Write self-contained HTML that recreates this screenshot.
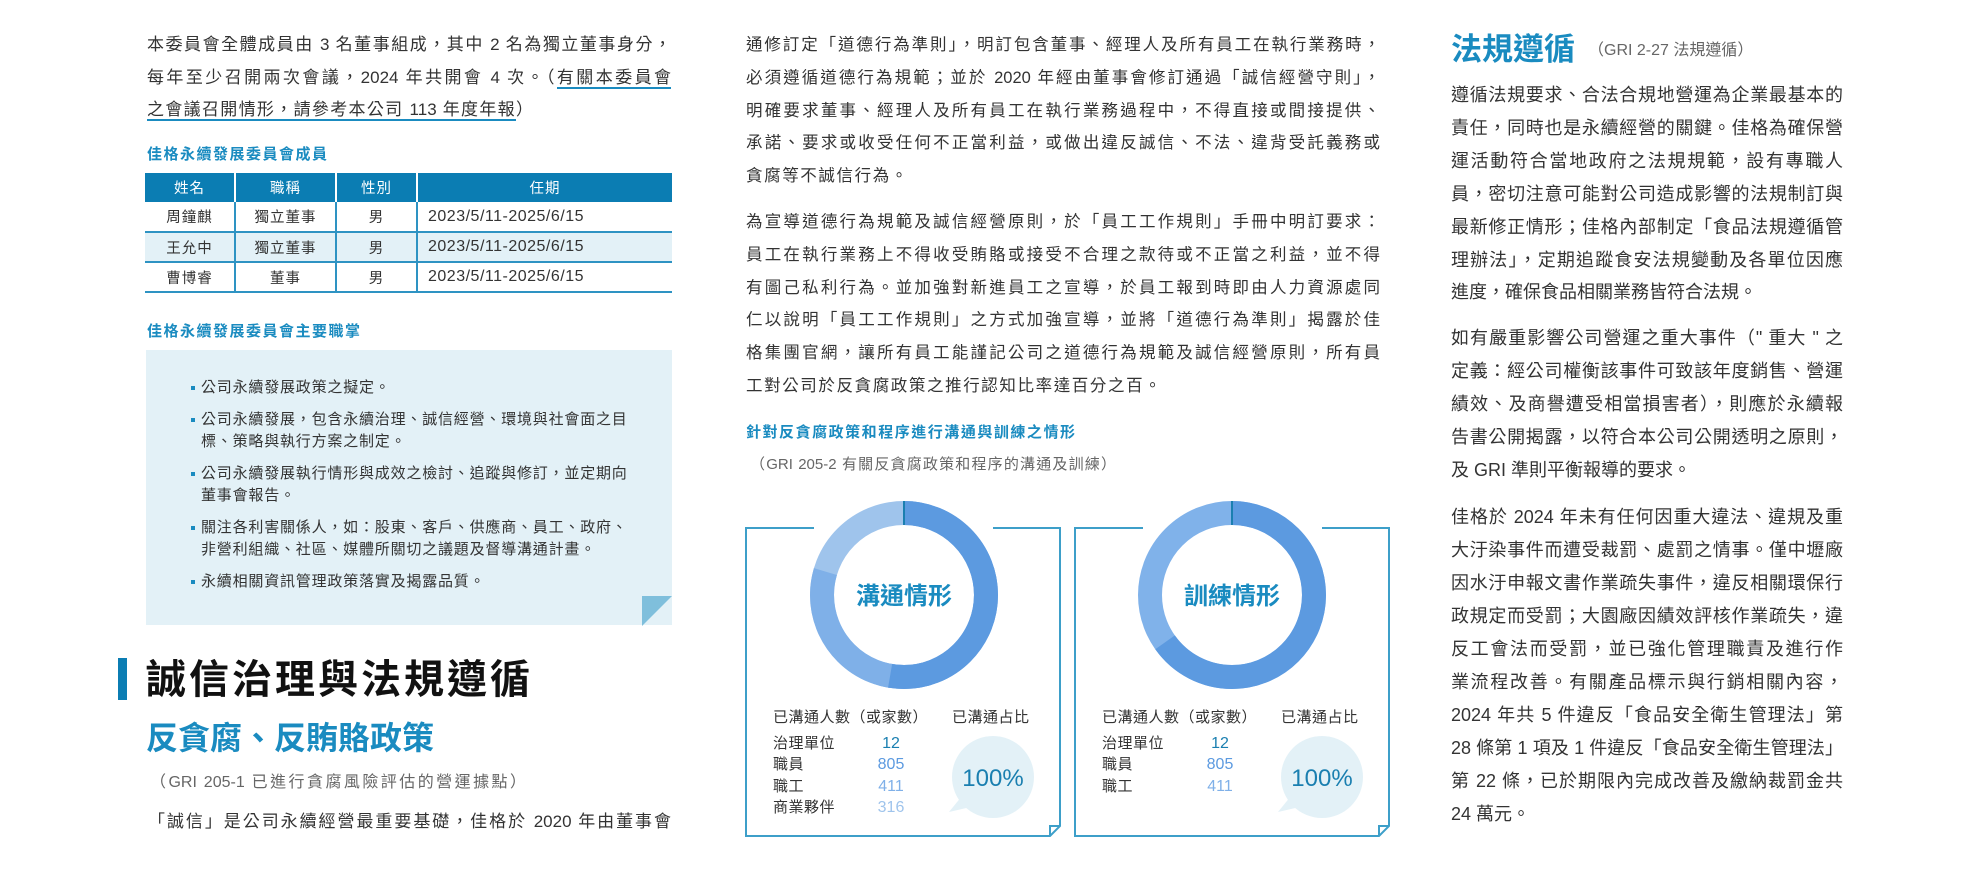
<!DOCTYPE html>
<html><head><meta charset="utf-8"><style>
*{margin:0;padding:0;box-sizing:border-box}
body{width:1980px;height:882px;background:#fff;position:relative;overflow:hidden;font-family:"Liberation Sans","Noto Sans CJK TC",sans-serif;color:#333}
.l{position:absolute;white-space:nowrap;height:26px;line-height:26px}
.j{text-align:justify;text-align-last:justify}
.c1{left:147px;width:524px;font-size:17px}
.c2{left:746px;width:634px;font-size:16.5px}
.c3{left:1451px;width:392px;font-size:18px}
.bh{color:#1a8bc0;font-weight:bold;font-size:15px}
u{text-decoration:none;border-bottom:2px solid #1a8bc0}
table{position:absolute;left:145px;top:173px;width:527px;border-collapse:collapse;font-size:14.5px}
th{background:#0b7db3;color:#fff;font-weight:normal;height:29px;border-left:2px solid #fff;letter-spacing:1px}
th:first-child{border-left:none}
td{height:30px;text-align:center;border-bottom:2px solid #2e93c3;border-left:2px solid #2e93c3;letter-spacing:1px}
td:first-child{border-left:none}
td.d{text-align:left;padding-left:10px;font-size:16px;letter-spacing:0.5px}
tr.a td{background:#e3f1f7}
.box{position:absolute;left:146px;top:350px;width:526px;height:275px;background:#e3f1f7}
.bl{position:absolute;left:201px;font-size:15px;letter-spacing:0.8px;white-space:nowrap;height:22px;line-height:22px;color:#333}
.bl:before{content:"";position:absolute;left:-10px;top:9px;width:4px;height:4px;background:#1a8bc0}
.bl.n:before{display:none}
.g{color:#666}
</style></head><body>

<div class="l c1 j" style="top:32px">本委員會全體成員由 3 名董事組成，其中 2 名為獨立董事身分，</div>
<div class="l c1 j" style="top:65px">每年至少召開兩次會議，2024 年共開會 4 次。（<u>有關本委員會</u></div>
<div class="l c1" style="top:97px;width:386px;text-align:justify;text-align-last:justify"><u>之會議召開情形，請參考本公司 113 年度年報</u>）</div>

<div class="l bh" style="left:147px;top:142px;letter-spacing:1.5px">佳格永續發展委員會成員</div>
<table>
<tr><th style="width:90px">姓名</th><th style="width:101px">職稱</th><th style="width:81px">性別</th><th>任期</th></tr>
<tr><td>周鐘麒</td><td>獨立董事</td><td>男</td><td class="d">2023/5/11-2025/6/15</td></tr>
<tr class="a"><td>王允中</td><td>獨立董事</td><td>男</td><td class="d">2023/5/11-2025/6/15</td></tr>
<tr><td>曹博睿</td><td>董事</td><td>男</td><td class="d">2023/5/11-2025/6/15</td></tr>
</table>
<div class="l bh" style="left:147px;top:319px;letter-spacing:1.5px">佳格永續發展委員會主要職掌</div>

<div class="box"></div>
<svg style="position:absolute;left:642px;top:595px" width="30" height="31"><polygon points="0,1 30,1 0,31" fill="#7fbfdc"/></svg>
<div class="bl" style="top:377px">公司永續發展政策之擬定。</div>
<div class="bl" style="top:409px">公司永續發展，包含永續治理、誠信經營、環境與社會面之目</div>
<div class="bl n" style="top:431px">標、策略與執行方案之制定。</div>
<div class="bl" style="top:463px">公司永續發展執行情形與成效之檢討、追蹤與修訂，並定期向</div>
<div class="bl n" style="top:485px">董事會報告。</div>
<div class="bl" style="top:517px">關注各利害關係人，如：股東、客戶、供應商、員工、政府、</div>
<div class="bl n" style="top:539px">非營利組織、社區、媒體所關切之議題及督導溝通計畫。</div>
<div class="bl" style="top:571px">永續相關資訊管理政策落實及揭露品質。</div>

<div style="position:absolute;left:118px;top:658px;width:9px;height:42px;background:#0b7db3"></div>
<div class="l j" style="left:146px;width:384px;top:656px;height:48px;line-height:48px;font-size:40px;font-weight:bold;color:#111">誠信治理與法規遵循</div>
<div class="l j" style="left:146px;width:288px;top:718px;height:40px;line-height:40px;font-size:32px;font-weight:bold;color:#1a8bc0">反貪腐、反賄賂政策</div>
<div class="l g j" style="left:150px;width:376px;top:770px;font-size:16px">（GRI 205-1 已進行貪腐風險評估的營運據點）</div>
<div class="l j" style="left:148px;width:523px;top:809px;font-size:17px">「誠信」是公司永續經營最重要基礎，佳格於 2020 年由董事會</div>

<div class="l c2 j" style="top:32px">通修訂定「道德行為準則」，明訂包含董事、經理人及所有員工在執行業務時，</div>
<div class="l c2 j" style="top:65px">必須遵循道德行為規範；並於 2020 年經由董事會修訂通過「誠信經營守則」，</div>
<div class="l c2 j" style="top:98px">明確要求董事、經理人及所有員工在執行業務過程中，不得直接或間接提供、</div>
<div class="l c2 j" style="top:130px">承諾、要求或收受任何不正當利益，或做出違反誠信、不法、違背受託義務或</div>
<div class="l c2" style="top:163px;letter-spacing:1.6px">貪腐等不誠信行為。</div>
<div class="l c2 j" style="top:209px">為宣導道德行為規範及誠信經營原則，於「員工工作規則」手冊中明訂要求：</div>
<div class="l c2 j" style="top:242px">員工在執行業務上不得收受賄賂或接受不合理之款待或不正當之利益，並不得</div>
<div class="l c2 j" style="top:275px">有圖己私利行為。並加強對新進員工之宣導，於員工報到時即由人力資源處同</div>
<div class="l c2 j" style="top:307px">仁以說明「員工工作規則」之方式加強宣導，並將「道德行為準則」揭露於佳</div>
<div class="l c2 j" style="top:340px">格集團官網，讓所有員工能謹記公司之道德行為規範及誠信經營原則，所有員</div>
<div class="l c2" style="top:373px;letter-spacing:1.6px">工對公司於反貪腐政策之推行認知比率達百分之百。</div>
<div class="l bh j" style="left:746px;width:329px;top:420px">針對反貪腐政策和程序進行溝通與訓練之情形</div>
<div class="l g j" style="left:750px;width:366px;top:452px;font-size:15px">（GRI 205-2 有關反貪腐政策和程序的溝通及訓練）</div>

<svg style="position:absolute;left:0;top:0" width="1980" height="882">
<g fill="none" stroke="#3d9fc9" stroke-width="2">
<polyline points="814,528 746,528 746,836 1050,836 1060,826 1060,528 993,528"/>
<polyline points="1050,836 1050,826 1060,826"/>
<polyline points="1143,528 1075,528 1075,836 1379,836 1389,826 1389,528 1322,528"/>
<polyline points="1379,836 1379,826 1389,826"/>
</g>
<g transform="translate(904,595)" fill="none" stroke-width="24">
<circle r="82" pathLength="360" stroke="#9fc4ec"/>
<circle r="82" pathLength="360" stroke="#7fb0e8" stroke-dasharray="287 360" transform="rotate(-90)"/>
<circle r="82" pathLength="360" stroke="#5c9ae0" stroke-dasharray="190 360" transform="rotate(-90)"/>
</g>
<line x1="904" y1="501" x2="904" y2="525" stroke="#1a7fb0" stroke-width="2"/>
<g transform="translate(1232,595)" fill="none" stroke-width="24">
<circle r="82" pathLength="360" stroke="#80b2ea"/>
<circle r="82" pathLength="360" stroke="#5c9ae0" stroke-dasharray="235 360" transform="rotate(-90)"/>
</g>
<line x1="1232" y1="501" x2="1232" y2="525" stroke="#1a7fb0" stroke-width="2"/>
<circle cx="993" cy="777" r="41" fill="#e3f1f7"/>
<path d="M962,796 L949,812 L975,806 Z" fill="#e3f1f7"/>
<circle cx="1322" cy="777" r="41" fill="#e3f1f7"/>
<path d="M1291,796 L1278,812 L1304,806 Z" fill="#e3f1f7"/>
<g font-family="Liberation Sans,Noto Sans CJK TC,sans-serif">
<text x="904" y="604" text-anchor="middle" font-size="24" font-weight="bold" fill="#1a8bc0">溝通情形</text>
<text x="1232" y="604" text-anchor="middle" font-size="24" font-weight="bold" fill="#1a8bc0">訓練情形</text>
<g font-size="15" fill="#333" letter-spacing="0.5">
<text x="773" y="722">已溝通人數（或家數）</text><text x="952" y="722">已溝通占比</text>
<text x="773" y="748">治理單位</text><text x="773" y="769">職員</text><text x="773" y="791">職工</text><text x="773" y="812">商業夥伴</text>
<text x="1102" y="722">已溝通人數（或家數）</text><text x="1281" y="722">已溝通占比</text>
<text x="1102" y="748">治理單位</text><text x="1102" y="769">職員</text><text x="1102" y="791">職工</text>
</g>
<g font-size="16" text-anchor="middle">
<text x="891" y="748" fill="#1a7fb0">12</text><text x="891" y="769" fill="#5c9ae0">805</text><text x="891" y="791" fill="#7fb0e8">411</text><text x="891" y="812" fill="#9fc4ec">316</text>
<text x="1220" y="748" fill="#1a7fb0">12</text><text x="1220" y="769" fill="#5c9ae0">805</text><text x="1220" y="791" fill="#7fb0e8">411</text>
</g>
<text x="993" y="786" text-anchor="middle" font-size="24" fill="#1a7fb0">100%</text>
<text x="1322" y="786" text-anchor="middle" font-size="24" fill="#1a7fb0">100%</text>
</g>
</svg>

<div class="l" style="left:1451px;top:30px;height:40px;line-height:40px;font-size:31px;font-weight:bold;color:#1a8bc0">法規遵循</div>
<div class="l g" style="left:1588px;top:38px;font-size:16px">（GRI 2-27 法規遵循）</div>
<div class="l c3 j" style="top:82px">遵循法規要求、合法合規地營運為企業最基本的</div>
<div class="l c3 j" style="top:115px">責任，同時也是永續經營的關鍵。佳格為確保營</div>
<div class="l c3 j" style="top:148px">運活動符合當地政府之法規規範，設有專職人</div>
<div class="l c3 j" style="top:181px">員，密切注意可能對公司造成影響的法規制訂與</div>
<div class="l c3 j" style="top:214px">最新修正情形；佳格內部制定「食品法規遵循管</div>
<div class="l c3 j" style="top:247px">理辦法」，定期追蹤食安法規變動及各單位因應</div>
<div class="l c3" style="top:279px">進度，確保食品相關業務皆符合法規。</div>
<div class="l c3 j" style="top:325px">如有嚴重影響公司營運之重大事件（" 重大 " 之</div>
<div class="l c3 j" style="top:358px">定義：經公司權衡該事件可致該年度銷售、營運</div>
<div class="l c3 j" style="top:391px">績效、及商譽遭受相當損害者），則應於永續報</div>
<div class="l c3 j" style="top:424px">告書公開揭露，以符合本公司公開透明之原則，</div>
<div class="l c3" style="top:457px">及 GRI 準則平衡報導的要求。</div>
<div class="l c3 j" style="top:504px">佳格於 2024 年未有任何因重大違法、違規及重</div>
<div class="l c3 j" style="top:537px">大汙染事件而遭受裁罰、處罰之情事。僅中壢廠</div>
<div class="l c3 j" style="top:570px">因水汙申報文書作業疏失事件，違反相關環保行</div>
<div class="l c3 j" style="top:603px">政規定而受罰；大園廠因績效評核作業疏失，違</div>
<div class="l c3 j" style="top:636px">反工會法而受罰，並已強化管理職責及進行作</div>
<div class="l c3 j" style="top:669px">業流程改善。有關產品標示與行銷相關內容，</div>
<div class="l c3 j" style="top:702px">2024 年共 5 件違反「食品安全衛生管理法」第</div>
<div class="l c3 j" style="top:735px">28 條第 1 項及 1 件違反「食品安全衛生管理法」</div>
<div class="l c3 j" style="top:768px">第 22 條，已於期限內完成改善及繳納裁罰金共</div>
<div class="l c3" style="top:801px">24 萬元。</div>
</body></html>
